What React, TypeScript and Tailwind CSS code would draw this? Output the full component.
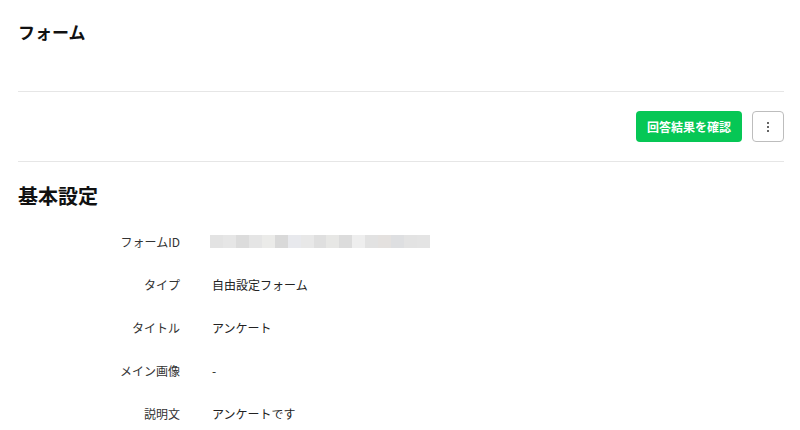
const ID_BLOCKS = [
  "#e3e3e3", "#e6e6e6", "#dcdcdc", "#e5e5e5", "#ebebe9", "#d9d9d9",
  "#e8e9ed", "#e8e8e8", "#dfdfdf", "#e7e7e5", "#dcdcdc", "#eeeeee",
  "#e2e2e2", "#e4e1df", "#dedfe1", "#e3e3e3", "#e4e4e4",
];

const ROWS: { label: string; value: string | null }[] = [
  { label: "フォームID", value: null },
  { label: "タイプ", value: "自由設定フォーム" },
  { label: "タイトル", value: "アンケート" },
  { label: "メイン画像", value: "-" },
  { label: "説明文", value: "アンケートです" },
];

export default function App() {
  return (
    <div
      className="w-[800px] h-[430px] bg-white text-[#111] overflow-hidden pl-[18px] pr-[16px]"
      style={{ fontFamily: '"Noto Sans CJK JP", "Noto Sans", sans-serif' }}
    >
      {/* Page title */}
      <div className="h-[92px] border-b border-[#e6e6e6] pt-[19px]">
        <h1 className="text-[17px] font-bold leading-[26px]">フォーム</h1>
      </div>

      {/* Actions */}
      <div className="h-[70px] border-b border-[#e6e6e6] flex items-center justify-end gap-[10px]">
        <button className="h-[31px] w-[106px] rounded-[4px] bg-[#06c755] text-white text-[12px] font-bold">
          回答結果を確認
        </button>
        <button className="h-[31px] w-[32px] rounded-[4px] border border-[#bdbdbd] bg-white flex flex-col items-center justify-center gap-[2px]">
          <span className="w-[2px] h-[2px] rounded-full bg-[#333]" />
          <span className="w-[2px] h-[2px] rounded-full bg-[#333]" />
          <span className="w-[2px] h-[2px] rounded-full bg-[#333]" />
        </button>
      </div>

      {/* Basic settings */}
      <h2 className="text-[20px] font-bold leading-[30px] mt-[19px]">基本設定</h2>

      <div className="mt-[9px] flex flex-col">
        {ROWS.map((r) => (
          <div key={r.label} className="flex items-center h-[43px]">
            <div className="w-[162px] text-right text-[12px] text-[#333] shrink-0">{r.label}</div>
            <div className="ml-[32px] text-[12px] text-[#222]">
              {r.value === null ? (
                <div className="flex h-[13px] w-[220px] -ml-[2px]">
                  {ID_BLOCKS.map((c, i) => (
                    <span key={i} className="h-full flex-1" style={{ backgroundColor: c }} />
                  ))}
                </div>
              ) : (
                r.value
              )}
            </div>
          </div>
        ))}
      </div>
    </div>
  );
}
